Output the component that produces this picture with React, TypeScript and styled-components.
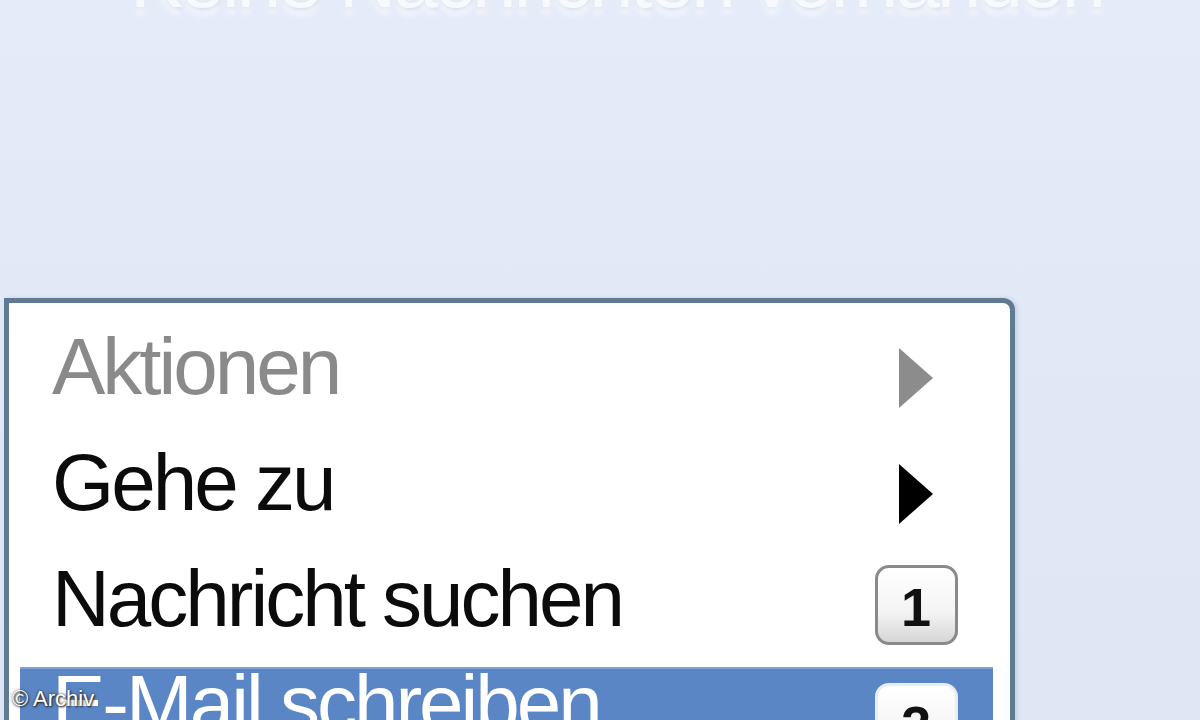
import React from "react";
import styled, { createGlobalStyle } from "styled-components";

const GlobalStyle = createGlobalStyle`
  html, body { margin: 0; padding: 0; }
  body { width: 1200px; height: 720px; overflow: hidden; font-family: "Liberation Sans", Arial, sans-serif; }
`;

const Page = styled.div`
  position: relative;
  width: 1200px;
  height: 720px;
  overflow: hidden;
  background: linear-gradient(180deg, #e5ebf8 0%, #e1e8f5 60%, #dfe6f4 100%);
`;

const Title = styled.div`
  margin: -60px 0 0 130px;
  height: 80px;
  font-size: 80px;
  line-height: 80px;
  letter-spacing: -3px;
  color: #f7f9fd;
  text-shadow: 0 8px 6px rgba(255, 255, 255, 0.55), 0 2px 3px rgba(190, 205, 225, 0.5);
  white-space: nowrap;
`;

const Menu = styled.div`
  margin: 278px 0 0 4px;
  width: 1011px;
  box-sizing: border-box;
  border: 5px solid #5e7b93;
  border-bottom: none;
  border-top-right-radius: 12px;
  background: #ffffff;
  padding: 6px 17px 0 11px;
  box-shadow: 2px 0 4px rgba(140, 160, 185, 0.35);
`;

const Row = styled.div<{ $selected?: boolean }>`
  height: 116px;
  display: flex;
  align-items: ${(p) => (p.$selected ? "flex-start" : "center")};
  justify-content: space-between;
  padding: 0 32px;
  margin-top: ${(p) => (p.$selected ? "10px" : "0")};
  background: ${(p) => (p.$selected ? "#5b86c6" : "transparent")};
  border-top: ${(p) => (p.$selected ? "2px solid #7fa3d8" : "none")};
  box-sizing: border-box;
`;

const Label = styled.span<{ $tone: "muted" | "normal" | "inverse" }>`
  font-family: "Liberation Sans", Arial, sans-serif;
  font-size: 80px;
  line-height: 80px;
  letter-spacing: -3px;
  white-space: nowrap;
  margin-top: ${(p) => (p.$tone === "inverse" ? "-5px" : "0")};
  color: ${(p) =>
    p.$tone === "muted" ? "#8a8a8a" : p.$tone === "inverse" ? "#ffffff" : "#0b0b0b"};
`;

const Accessory = styled.div<{ $offset: number }>`
  width: 90px;
  display: flex;
  justify-content: center;
  margin-top: ${(p) => p.$offset}px;
`;

const Badge = styled.div<{ $onBlue?: boolean }>`
  width: 83px;
  height: 80px;
  box-sizing: border-box;
  border: 3px solid ${(p) => (p.$onBlue ? "#e8eef8" : "#8a8a8a")};
  border-radius: 14px;
  background: linear-gradient(180deg, #ffffff 0%, #f4f4f4 60%, #d6d6d6 100%);
  display: flex;
  align-items: center;
  justify-content: center;
  font-family: "Liberation Sans", Arial, sans-serif;
  font-weight: bold;
  font-size: 54px;
  color: #111;
  padding-top: 4px;
`;

const Watermark = styled.div`
  position: absolute;
  left: 12px;
  bottom: 8px;
  font-family: "Liberation Sans", Arial, sans-serif;
  font-size: 22px;
  color: #ffffff;
  text-shadow: 0 0 3px #333, 1px 1px 2px #222;
`;

const Arrow = ({ color }: { color: string }) => (
  <svg width="36" height="62" viewBox="0 0 36 62">
    <polygon points="1,1 35,31 1,61" fill={color} />
  </svg>
);

export default function App() {
  return (
    <>
      <GlobalStyle />
      <Page>
        <Title>Keine Nachrichten vorhanden</Title>
        <Menu>
          <Row>
            <Label $tone="muted">Aktionen</Label>
            <Accessory $offset={22}>
              <Arrow color="#8c8c8c" />
            </Accessory>
          </Row>
          <Row>
            <Label $tone="normal">Gehe zu</Label>
            <Accessory $offset={22}>
              <Arrow color="#000000" />
            </Accessory>
          </Row>
          <Row>
            <Label $tone="normal">Nachricht suchen</Label>
            <Accessory $offset={12}>
              <Badge>1</Badge>
            </Accessory>
          </Row>
          <Row $selected>
            <Label $tone="inverse">E-Mail schreiben</Label>
            <Accessory $offset={14}>
              <Badge $onBlue>2</Badge>
            </Accessory>
          </Row>
        </Menu>
        <Watermark>© Archiv</Watermark>
      </Page>
    </>
  );
}
